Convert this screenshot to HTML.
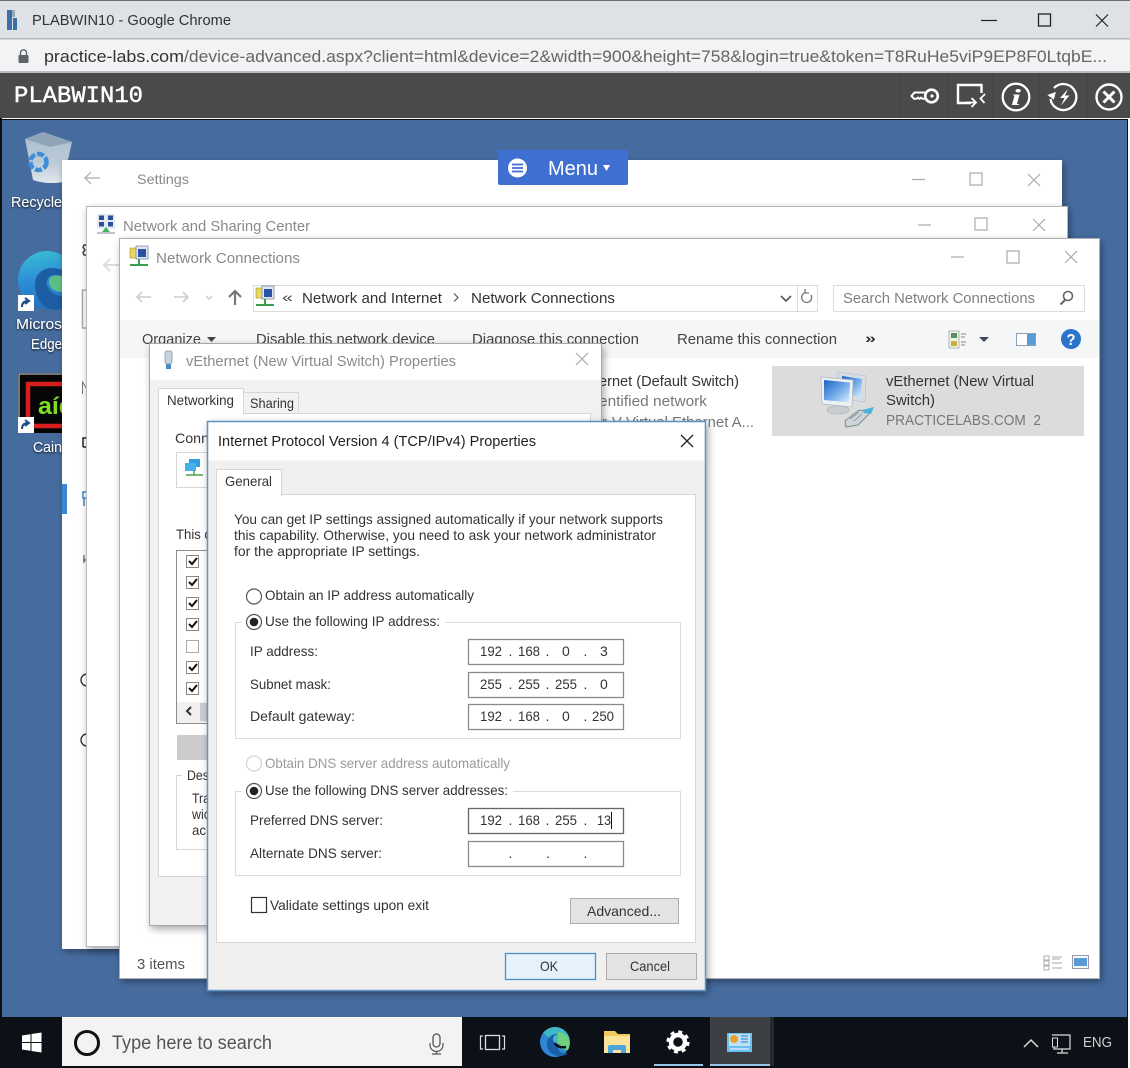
<!DOCTYPE html>
<html><head><meta charset="utf-8"><title>PLABWIN10</title>
<style>
html,body{margin:0;padding:0;background:#fff;width:1130px;height:1068px;overflow:hidden}
svg{display:block;filter:blur(.35px)}
text{font-family:"Liberation Sans",sans-serif;font-size:14px;fill:#333;white-space:pre}
.g{fill:#8a8a8a}.m{fill:#555}.d{fill:#222}.w{fill:#fff}
.f{font-size:14px;fill:#333}
.c{stroke:#aaa;stroke-width:1.2;fill:none}
.k{stroke:#111;stroke-width:1.8;fill:none}
</style></head><body>
<svg width="1130" height="1068" viewBox="0 0 1130 1068" xmlns="http://www.w3.org/2000/svg">
<defs>
<filter id="sh" x="-5%" y="-5%" width="110%" height="110%"><feDropShadow dx="2" dy="3" stdDeviation="4" flood-color="#000" flood-opacity=".35"/></filter>
<filter id="ts" x="-10%" y="-20%" width="120%" height="140%"><feDropShadow dx="0" dy="1" stdDeviation="1" flood-color="#000" flood-opacity=".9"/></filter>
<linearGradient id="ed" x1="0.2" y1="0" x2="0.4" y2="1"><stop offset="0" stop-color="#38bfd4"/><stop offset=".5" stop-color="#2c8ed6"/><stop offset="1" stop-color="#2470bd"/></linearGradient>
<linearGradient id="sc" x1="0" y1="0" x2="1" y2="1"><stop offset="0" stop-color="#1a62c8"/><stop offset=".6" stop-color="#7fb4ec"/><stop offset="1" stop-color="#e2effb"/></linearGradient>
<linearGradient id="bin" x1="0" y1="0" x2="0" y2="1"><stop offset="0" stop-color="#a9bccd"/><stop offset=".6" stop-color="#bccbd8"/><stop offset="1" stop-color="#e2e7ec"/></linearGradient>
<g id="net"><rect x="-9" y="-9" width="12" height="10" fill="#e8d860" stroke="#a09020" stroke-width=".6"/><rect x="-3" y="-11" width="12" height="13" fill="#dfe6f0" stroke="#7a8ca8" stroke-width=".8"/><rect x="-1" y="-8" width="8" height="8" fill="#2a50a8"/><path d="M-9 8H9M0 2V8" stroke="#3aa050" stroke-width="2" fill="none"/></g>
</defs>

<!-- chrome -->
<rect width="1130" height="38" fill="#dee1e6"/>
<rect width="1130" height="1" fill="#6b6e73"/>
<rect y="38" width="1130" height="1.5" fill="#b8babd"/>
<rect y="39.5" width="1130" height="32" fill="#f1f3f4"/>
<rect y="71" width="1130" height="2" fill="#b9bbbe"/>
<path d="M7 10h5v20H7zM13 18h4v12h-4z" fill="#3d6fa8"/><path d="M12 10h3v7h-3z" fill="#9ab"/>
<text x="32" y="25" textLength="199" lengthAdjust="spacingAndGlyphs" style="font-size:14.5px;fill:#333">PLABWIN10 - Google Chrome</text>
<path d="M981 20.500h16" stroke="#222" stroke-width="1.200"/>
<rect x="1038.500" y="14" width="12" height="12" fill="none" stroke="#222" stroke-width="1.300"/>
<path d="M1096 14.500l12 12M1108 14.500l-12 12" stroke="#222" stroke-width="1.200"/>
<rect x="18.500" y="55" width="10" height="8" rx="1" fill="#5f6368"/><path d="M20.500 55v-2.200a3 3 0 0 1 6 0V55" fill="none" stroke="#5f6368" stroke-width="1.400"/>
<text x="44" y="62" textLength="140" lengthAdjust="spacingAndGlyphs" style="font-size:17px;fill:#333">practice-labs.com</text>
<text x="184" y="62" textLength="923" lengthAdjust="spacingAndGlyphs" style="font-size:17px;fill:#666">/device-advanced.aspx?client=html&amp;device=2&amp;width=900&amp;height=758&amp;login=true&amp;token=T8RuHe5viP9EP8F0LtqbE...</text>

<!-- portal toolbar -->
<rect y="73" width="1130" height="45" fill="#4a4a4a"/>
<text x="14" y="102" textLength="129" lengthAdjust="spacingAndGlyphs" style="font-family:'Liberation Mono',monospace;font-size:23px;fill:#fff;stroke:#fff;stroke-width:.45">PLABWIN10</text>
<path d="M900.500 74v44M947.500 74v44M992.500 74v44M1039.500 74v44M1087.500 74v44" stroke="#444"/>
<g fill="none" stroke="#fff" stroke-width="2.300">
<!-- key -->
<circle cx="931.500" cy="96" r="6.300" stroke-width="2.600"/><circle cx="932" cy="96" r="1.600" fill="#fff" stroke="none"/>
<path d="M925 92.500h-10.500l-3 3.500 2.500 2.800h2.500l1.500-1.200 1.500 1.200 1.500-1.200 1.500 1.200h3" stroke-width="2"/>
<!-- screen -->
<path d="M971 103H958V85h23.500v8" stroke-width="2.400"/>
<path d="M971.500 98l4.500 4.500-4.500 4.500" stroke-width="1.800"/><path d="M985 94l-4.500 4.500 4 4.500" stroke-width="1.800"/>
<path d="M966 102.500h9" stroke-width="1.800"/>
<!-- info -->
<circle cx="1016" cy="97" r="13.300" stroke-width="2.300"/>
<!-- bolt -->
<path d="M1054 88a13 13 0 1 1-3.500 11" stroke-width="2.300"/>
<!-- close -->
<circle cx="1109" cy="97" r="12.500" stroke-width="2.400"/><path d="M1103.500 91.500l11 11M1114.500 91.500l-11 11" stroke-width="3"/>
</g>
<path d="M1048 93.500h9l-4.500 6.500z" fill="#fff" transform="rotate(-20 1052 96)"/>
<path d="M1068 89l-8 9h4.500l-3.500 7.500 8.500-10h-4.500z" fill="#fff"/>
<text x="1011" y="105" textLength="10" lengthAdjust="spacingAndGlyphs" style="font-family:'Liberation Serif',serif;font-style:italic;font-weight:bold;font-size:23px;fill:#fff">i</text>

<!-- desktop -->
<rect y="118" width="1130" height="950" fill="#fff"/>
<rect x="0" y="118" width="1128" height="950" fill="#0c0f14"/>
<rect x="2" y="118" width="1126" height="1" fill="#f4f4f4"/>
<rect x="2" y="120" width="1125" height="897" fill="#466c9f"/>

<!-- desktop icons -->
<path d="M25 139l18-7 29 10-9 40c-10 2-22 1-30-2z" fill="url(#bin)"/><path d="M25 139l18-7 29 10-22 5z" fill="#8fa4b8"/>
<circle cx="38.500" cy="162" r="8" fill="none" stroke="#3f8fd8" stroke-width="4.500" stroke-dasharray="7 2"/>
<text x="11" y="207" textLength="51" lengthAdjust="spacingAndGlyphs" filter="url(#ts)" style="font-size:14.500px;fill:#fff">Recycle</text>
<circle cx="47" cy="280" r="29" fill="url(#ed)"/>
<path d="M35 284c0-12 12-20 27-14v7c-9-5-17 0-15 8 2 7 9 11 15 11v13c-4 1-8 1-12 0-9-3-15-13-15-25z" fill="#1c5da3"/>
<path d="M49 283c-1-6 5-9 13-7v16c-6 0-12-3-13-9z" fill="#5dbf86"/>
<rect x="18" y="295" width="16" height="16" fill="#fff"/><path d="M22 307c0-4 2-6 6-6M25 298l4 3-4 3" stroke="#1a4e8a" stroke-width="2" fill="none"/>
<text x="16" y="329" textLength="46" lengthAdjust="spacingAndGlyphs" filter="url(#ts)" style="font-size:14.500px;fill:#fff">Micros</text>
<text x="31" y="349" textLength="31" lengthAdjust="spacingAndGlyphs" filter="url(#ts)" style="font-size:14.500px;fill:#fff">Edge</text>
<rect x="18" y="373" width="46" height="60" fill="#060606"/><path d="M19 433v-59h44" fill="none" stroke="#e4e4e4" stroke-width="1"/><path d="M64 384H28v42h36" fill="none" stroke="#d81e1e" stroke-width="4.500"/>
<text x="38" y="414" textLength="36" lengthAdjust="spacingAndGlyphs" style="font-size:24px;font-weight:bold;fill:#7ee020">aíd</text>
<rect x="18" y="417" width="16" height="16" fill="#fff"/><path d="M22 429c0-4 2-6 6-6M25 420l4 3-4 3" stroke="#1a4e8a" stroke-width="2" fill="none"/>
<text x="33" y="452" textLength="29" lengthAdjust="spacingAndGlyphs" filter="url(#ts)" style="font-size:14.500px;fill:#fff">Cain</text>

<!-- settings window -->
<rect x="62" y="160" width="1000" height="789" fill="#fff" filter="url(#sh)"/>
<path d="M85 178h15M91 172l-6 6 6 6" class="c"/>
<text x="137" y="184" textLength="52" lengthAdjust="spacingAndGlyphs" class="g">Settings</text>
<path d="M912 179.500h13" class="c"/><rect x="970" y="173" width="12" height="12" class="c"/><path d="M1028 174l12 12M1040 174l-12 12" class="c"/>
<rect x="62" y="484" width="5" height="30" fill="#3a87d6"/>
<path d="M87 290h-4.500v38h4.500" stroke="#aaa" stroke-width="1.500" fill="none"/>
<path d="M87 245h-3l-1 2.500 2 2.500-2 2.500 1 2.500h3" stroke="#444" stroke-width="1.500" fill="none"/>
<path d="M82.500 394v-12l5 8" stroke="#777" fill="none"/>
<path d="M83 447v-9h4M83 447h4" stroke="#222" stroke-width="1.500" fill="none"/>
<path d="M83 492h4v6h-4zM84 498v8" stroke="#3a87d6" stroke-width="1.500" fill="none"/>
<path d="M83 560h4M84 555v8" stroke="#444" fill="none"/><path d="M87 674a6 6 0 0 0 0 12" stroke="#333" stroke-width="1.400" fill="none"/><path d="M87 734a6 6 0 0 0 0 12" stroke="#333" stroke-width="1.400" fill="none"/>

<!-- sharing center window -->
<rect x="86.500" y="206.500" width="981" height="740" fill="#fff" stroke="#b8b8b8" filter="url(#sh)"/>
<g transform="translate(97 214)"><rect width="18" height="15" fill="#e6e9f2"/><path d="M2 1.500h5v4.500H2zM11 1.500h5v4.500h-5zM2 8h5v4.500H2zM11 8h5v4.500h-5z" fill="#2a4fa0"/><path d="M9 13l4 5H5z" fill="#45b060"/><path d="M0 19H18" stroke="#a8b0b8" stroke-width="1.500"/></g>
<text x="123" y="231" textLength="187" lengthAdjust="spacingAndGlyphs" class="g" style="font-size:15px">Network and Sharing Center</text>
<path d="M918 225h13" class="c"/><rect x="975" y="218" width="12" height="12" class="c"/><path d="M1033 219l12 12M1045 219l-12 12" class="c"/>
<path d="M104 265h15M110 259l-6 6 6 6" stroke="#ddd" stroke-width="2" fill="none"/>

<!-- network connections window -->
<rect x="119.500" y="238.500" width="980" height="740" fill="#fff" stroke="#b0b0b0" filter="url(#sh)"/>
<g transform="translate(139 257)"><use href="#net"/></g>
<text x="156" y="263" textLength="144" lengthAdjust="spacingAndGlyphs" class="g" style="font-size:15px">Network Connections</text>
<path d="M951 257h13" class="c"/><rect x="1007" y="251" width="12" height="12" class="c"/><path d="M1065 251l12 12M1077 251l-12 12" class="c"/>
<path d="M137 297h14M142 292l-5 5 5 5M174 297h14M183 292l5 5-5 5" stroke="#ccc" stroke-width="1.600" fill="none"/>
<path d="M206 296l3 3 3-3" stroke="#ccc" stroke-width="1.400" fill="none"/>
<path d="M235 305V291M229 297l6-6 6 6" stroke="#777" stroke-width="2.200" fill="none"/>
<rect x="253.500" y="285.500" width="564" height="26" fill="#fff" stroke="#dcdcdc"/>
<path d="M797.500 286v25" stroke="#dcdcdc"/>
<g transform="translate(265 297)"><use href="#net"/></g>
<text x="282" y="302" textLength="11" lengthAdjust="spacingAndGlyphs" style="font-size:14px;fill:#444">«</text>
<text x="302" y="303" textLength="140" lengthAdjust="spacingAndGlyphs" style="font-size:14.500px;fill:#333">Network and Internet</text>
<path d="M454 293.500l4 4-4 4" stroke="#555" fill="none" stroke-width="1.200"/>
<text x="471" y="303" textLength="144" lengthAdjust="spacingAndGlyphs" style="font-size:14.500px;fill:#333">Network Connections</text>
<path d="M781 296l5 5 5-5" stroke="#555" stroke-width="1.600" fill="none"/>
<path d="M811 295a5 5 0 1 1-5-2.500M805 289v4h4" stroke="#777" stroke-width="1.300" fill="none"/>
<rect x="833.500" y="285.500" width="251" height="26" fill="#fff" stroke="#dcdcdc"/>
<text x="843" y="303" textLength="192" lengthAdjust="spacingAndGlyphs" style="font-size:14.500px;fill:#808080">Search Network Connections</text>
<circle cx="1068" cy="296" r="4.500" fill="none" stroke="#666" stroke-width="1.600"/><path d="M1065 300l-4.500 4.500" stroke="#666" stroke-width="2"/>
<rect x="120" y="320" width="979" height="38" fill="#f5f6f7"/>
<text x="142" y="344" textLength="59" lengthAdjust="spacingAndGlyphs" style="font-size:14.500px;fill:#444">Organize</text><path d="M207 337h9l-4.500 5z" fill="#444"/>
<text x="256" y="344" textLength="179" lengthAdjust="spacingAndGlyphs" style="font-size:14.500px;fill:#444">Disable this network device</text>
<text x="472" y="344" textLength="167" lengthAdjust="spacingAndGlyphs" style="font-size:14.500px;fill:#444">Diagnose this connection</text>
<text x="677" y="344" textLength="160" lengthAdjust="spacingAndGlyphs" style="font-size:14.500px;fill:#444">Rename this connection</text>
<text x="865" y="343" textLength="11" lengthAdjust="spacingAndGlyphs" style="font-size:14px;fill:#333;font-weight:bold">»</text>
<rect x="949" y="331" width="10" height="17" fill="#eef3ea" stroke="#999" stroke-width=".7"/><rect x="951" y="333" width="6" height="5" fill="#5a8f60"/><rect x="951" y="341" width="6" height="5" fill="#c8b040"/><path d="M961 334h5M961 337h4M961 342h5M961 345h4" stroke="#888"/>
<path d="M979 337h10l-5 5z" fill="#3c4a5c"/>
<rect x="1016.500" y="333.500" width="19" height="12" fill="#fff" stroke="#8aa0b8"/><rect x="1027" y="334" width="8" height="11" fill="#5a9bd6"/>
<circle cx="1071" cy="339" r="10" fill="#2b74c9"/>
<text x="1066.500" y="345" textLength="9" lengthAdjust="spacingAndGlyphs" style="font-size:16px;font-weight:bold;fill:#fff">?</text>

<!-- items -->
<text x="599" y="386" textLength="140" lengthAdjust="spacingAndGlyphs" style="font-size:14.500px;fill:#333">ernet (Default Switch)</text>
<text x="599" y="406" textLength="108" lengthAdjust="spacingAndGlyphs" style="font-size:14.500px;fill:#777">entified network</text>
<text x="602" y="427" textLength="152" lengthAdjust="spacingAndGlyphs" style="font-size:14.500px;fill:#777">r-V Virtual Ethernet A...</text>
<rect x="772" y="366" width="312" height="70" fill="#dcdcdc"/>
<!-- network icon -->
<path d="M838 372l28 4-1 26-27-4z" fill="#d6dce3" stroke="#b4bcc4" stroke-width=".6"/>
<path d="M842 376l20 3-1 18-19-3z" fill="url(#sc)"/>
<path d="M821 377l32 3-1 27-30-3z" fill="#eef1f4" stroke="#aeb6be" stroke-width=".7"/>
<path d="M824 380l26 2.500-1 20-25-2.500z" fill="url(#sc)"/>
<ellipse cx="838" cy="410" rx="11" ry="4" fill="#c9ced3" stroke="#a9afb5" stroke-width=".6"/>
<path d="M845 421l14-11 12 2-13 13-12 2z" fill="#cdd5d9" stroke="#7e8c92" stroke-width="1"/>
<path d="M850 419l9-7M854 421l8-7" stroke="#7e8c92" stroke-width=".8"/>
<path d="M862 410l12-3-3 7-7-1z" fill="#49b3d8"/>
<text x="886" y="386" textLength="148" lengthAdjust="spacingAndGlyphs" style="font-size:14.500px;fill:#333">vEthernet (New Virtual</text>
<text x="886" y="405" textLength="49" lengthAdjust="spacingAndGlyphs" style="font-size:14.500px;fill:#333">Switch)</text>
<text x="886" y="425" textLength="155" lengthAdjust="spacingAndGlyphs" style="font-size:14.500px;fill:#777">PRACTICELABS.COM  2</text>
<text x="137" y="969" textLength="48" lengthAdjust="spacingAndGlyphs" style="font-size:14.500px;fill:#555">3 items</text>
<path d="M1044 956h5v4h-5zM1044 961h5v4h-5zM1044 966h5v4h-5z" fill="none" stroke="#999" stroke-width=".8"/><path d="M1052 957h10M1052 959h8M1052 963h10M1052 968h10" stroke="#aaa"/>
<rect x="1072.500" y="955.500" width="16" height="13" fill="#f4f8fb" stroke="#99a"/><rect x="1074" y="958" width="13" height="8" fill="#5a9bd6"/>

<!-- properties window -->
<rect x="149.500" y="343.500" width="452" height="582" fill="#f1f1f1" stroke="#a8a8a8" filter="url(#sh)"/>
<rect x="150" y="344" width="451" height="36" fill="#fff"/>
<rect x="165" y="351" width="7" height="13" rx="2" fill="#c8d4dc" stroke="#8a9aa6" stroke-width=".8"/><rect x="166" y="364" width="5" height="5" fill="#4a8ac0"/>
<text x="186" y="366" textLength="270" lengthAdjust="spacingAndGlyphs" class="g" style="font-size:15px">vEthernet (New Virtual Switch) Properties</text>
<path d="M576 353l12 12M588 353l-12 12" class="c"/>
<rect x="158.500" y="413.500" width="432" height="463" fill="#fff" stroke="#d6d6d6"/>
<rect x="243.500" y="392.500" width="55" height="21" fill="#f2f2f2" stroke="#d6d6d6"/>
<rect x="158.500" y="388.500" width="85" height="25" fill="#fff" stroke="#d6d6d6"/><rect x="159" y="412" width="84" height="3" fill="#fff"/>
<text x="167" y="405" textLength="67" lengthAdjust="spacingAndGlyphs" style="font-size:14px;fill:#333">Networking</text>
<text x="250" y="408" textLength="44" lengthAdjust="spacingAndGlyphs" style="font-size:14px;fill:#333">Sharing</text>
<text x="175" y="443" textLength="34" lengthAdjust="spacingAndGlyphs" style="font-size:14px;fill:#333">Conn</text>
<rect x="176.500" y="452.500" width="60" height="35" fill="#fff" stroke="#d6d6d6"/>
<rect x="189" y="459" width="11" height="8" fill="#2f9fe0"/><rect x="185" y="463" width="11" height="8" fill="#47b0ea"/><path d="M186 475h17M194 471v4" stroke="#4aa050" stroke-width="1.500"/>
<text x="176" y="539" textLength="35" lengthAdjust="spacingAndGlyphs" style="font-size:14px;fill:#333">This c</text>
<rect x="176.500" y="550.500" width="60" height="173" fill="#fff" stroke="#8c8c8c"/>
<g fill="#fff" stroke="#888"><rect x="186.500" y="555.500" width="12" height="12"/><rect x="186.500" y="576.500" width="12" height="12"/><rect x="186.500" y="597.500" width="12" height="12"/><rect x="186.500" y="618.500" width="12" height="12"/><rect x="186.500" y="640.500" width="12" height="12" stroke="#aaa"/><rect x="186.500" y="661.500" width="12" height="12"/><rect x="186.500" y="682.500" width="12" height="12"/></g>
<g fill="none" stroke="#111" stroke-width="2"><path d="M189 561l3 3 5-6M189 582l3 3 5-6M189 603l3 3 5-6M189 624l3 3 5-6M189 667l3 3 5-6M189 688l3 3 5-6"/></g>
<rect x="177" y="702" width="59" height="21" fill="#f0f0f0"/><rect x="200" y="703" width="10" height="18" fill="#cdcdcd"/>
<path d="M191 707l-4 4 4 4" stroke="#333" stroke-width="2" fill="none"/>
<rect x="177" y="735" width="40" height="25" fill="#cccccc"/>
<rect x="176.500" y="775.500" width="60" height="74" fill="none" stroke="#d6d6d6"/>
<rect x="182" y="770" width="30" height="12" fill="#fff"/>
<text x="187" y="780" textLength="22" lengthAdjust="spacingAndGlyphs" style="font-size:14px;fill:#333">Des</text>
<text x="192" y="803" textLength="18" lengthAdjust="spacingAndGlyphs" style="font-size:14px;fill:#333">Tra</text>
<text x="192" y="819" textLength="18" lengthAdjust="spacingAndGlyphs" style="font-size:14px;fill:#333">wic</text>
<text x="192" y="835" textLength="14" lengthAdjust="spacingAndGlyphs" style="font-size:14px;fill:#333">ac</text>

<!-- ipv4 window -->
<rect x="207.500" y="421.500" width="498" height="569" fill="#f0f0f0" stroke="#5f94c4" stroke-width="1.500" filter="url(#sh)"/>
<rect x="208.500" y="422.500" width="496" height="38" fill="#fff"/>
<text x="218" y="446" textLength="318" lengthAdjust="spacingAndGlyphs" style="font-size:14.500px;fill:#222">Internet Protocol Version 4 (TCP/IPv4) Properties</text>
<path d="M681 435l12 12M693 435l-12 12" stroke="#222" stroke-width="1.300"/>
<rect x="216.500" y="494.500" width="479" height="448" fill="#fff" stroke="#d6d6d6"/>
<rect x="216.500" y="469.500" width="65" height="26" fill="#fff" stroke="#d6d6d6"/><rect x="217" y="493" width="64" height="3" fill="#fff"/>
<text x="225" y="486" textLength="47" lengthAdjust="spacingAndGlyphs" style="font-size:14px;fill:#333">General</text>
<text x="234" y="524" textLength="429" lengthAdjust="spacingAndGlyphs" class="f">You can get IP settings assigned automatically if your network supports</text>
<text x="234" y="540" textLength="422" lengthAdjust="spacingAndGlyphs" class="f">this capability. Otherwise, you need to ask your network administrator</text>
<text x="234" y="556" textLength="186" lengthAdjust="spacingAndGlyphs" class="f">for the appropriate IP settings.</text>

<rect x="235.500" y="622.500" width="445" height="116" fill="none" stroke="#dcdcdc"/>
<rect x="242" y="614" width="203" height="16" fill="#fff"/>
<circle cx="254" cy="596.500" r="7.500" fill="#fff" stroke="#555" stroke-width="1.200"/>
<text x="265" y="600" textLength="209" lengthAdjust="spacingAndGlyphs" class="f">Obtain an IP address automatically</text>
<circle cx="254" cy="622" r="7.500" fill="#fff" stroke="#555" stroke-width="1.200"/><circle cx="254" cy="622" r="4.300" fill="#222"/>
<text x="265" y="626" textLength="175" lengthAdjust="spacingAndGlyphs" class="f">Use the following IP address:</text>
<text x="250" y="656" textLength="68" lengthAdjust="spacingAndGlyphs" class="f">IP address:</text>
<text x="250" y="689" textLength="81" lengthAdjust="spacingAndGlyphs" class="f">Subnet mask:</text>
<text x="250" y="721" textLength="105" lengthAdjust="spacingAndGlyphs" class="f">Default gateway:</text>
<g fill="#fff" stroke="#8a8a8a" stroke-width="1.300"><rect x="468.500" y="639.500" width="155" height="25"/><rect x="468.500" y="672.500" width="155" height="25"/><rect x="468.500" y="704.500" width="155" height="25"/><rect x="468.500" y="808.500" width="155" height="25" stroke="#666"/><rect x="468.500" y="841.500" width="155" height="25"/></g>
<g class="f">
<text x="480" y="656" textLength="22" lengthAdjust="spacingAndGlyphs" class="f">192</text><text x="508.500" y="656" class="f">.</text><text x="518" y="656" textLength="22" lengthAdjust="spacingAndGlyphs" class="f">168</text><text x="545.500" y="656" class="f">.</text><text x="562" y="656" class="f">0</text><text x="583.500" y="656" class="f">.</text><text x="600" y="656" class="f">3</text>
<text x="480" y="689" textLength="22" lengthAdjust="spacingAndGlyphs" class="f">255</text><text x="508.500" y="689" class="f">.</text><text x="518" y="689" textLength="22" lengthAdjust="spacingAndGlyphs" class="f">255</text><text x="545.500" y="689" class="f">.</text><text x="555" y="689" textLength="22" lengthAdjust="spacingAndGlyphs" class="f">255</text><text x="583.500" y="689" class="f">.</text><text x="600" y="689" class="f">0</text>
<text x="480" y="721" textLength="22" lengthAdjust="spacingAndGlyphs" class="f">192</text><text x="508.500" y="721" class="f">.</text><text x="518" y="721" textLength="22" lengthAdjust="spacingAndGlyphs" class="f">168</text><text x="545.500" y="721" class="f">.</text><text x="562" y="721" class="f">0</text><text x="583.500" y="721" class="f">.</text><text x="592" y="721" textLength="22" lengthAdjust="spacingAndGlyphs" class="f">250</text>
<text x="480" y="825" textLength="22" lengthAdjust="spacingAndGlyphs" class="f">192</text><text x="508.500" y="825" class="f">.</text><text x="518" y="825" textLength="22" lengthAdjust="spacingAndGlyphs" class="f">168</text><text x="545.500" y="825" class="f">.</text><text x="555" y="825" textLength="22" lengthAdjust="spacingAndGlyphs" class="f">255</text><text x="583.500" y="825" class="f">.</text><text x="597" y="825" textLength="14" lengthAdjust="spacingAndGlyphs" class="f">13</text>
<text x="508.500" y="858" class="f">.</text><text x="546" y="858" class="f">.</text><text x="583.500" y="858" class="f">.</text>
</g>
<path d="M611.500 812v17" stroke="#111"/>

<circle cx="254" cy="763.500" r="7.500" fill="#fff" stroke="#d4d4d4" stroke-width="1.200"/>
<text x="265" y="768" textLength="245" lengthAdjust="spacingAndGlyphs" style="font-size:14px;fill:#9a9a9a">Obtain DNS server address automatically</text>
<rect x="235.500" y="791.500" width="445" height="84" fill="none" stroke="#dcdcdc"/>
<rect x="242" y="783" width="271" height="16" fill="#fff"/>
<circle cx="254" cy="791" r="7.500" fill="#fff" stroke="#555" stroke-width="1.200"/><circle cx="254" cy="791" r="4.300" fill="#222"/>
<text x="265" y="795" textLength="243" lengthAdjust="spacingAndGlyphs" class="f">Use the following DNS server addresses:</text>
<text x="250" y="825" textLength="133" lengthAdjust="spacingAndGlyphs" class="f">Preferred DNS server:</text>
<text x="250" y="858" textLength="132" lengthAdjust="spacingAndGlyphs" class="f">Alternate DNS server:</text>
<rect x="251.500" y="897.500" width="15" height="15" fill="#fff" stroke="#333" stroke-width="1.200"/>
<text x="270" y="910" textLength="159" lengthAdjust="spacingAndGlyphs" class="f">Validate settings upon exit</text>
<rect x="570.500" y="898.500" width="108" height="25" fill="#e3e3e3" stroke="#adadad"/>
<text x="587" y="916" textLength="74" lengthAdjust="spacingAndGlyphs" class="f">Advanced...</text>
<rect x="505.500" y="953.500" width="90" height="26" fill="#e5f1fb" stroke="#4a90c8" stroke-width="1.300"/>
<text x="540" y="971" textLength="18" lengthAdjust="spacingAndGlyphs" class="f">OK</text>
<rect x="606.500" y="953.500" width="90" height="26" fill="#e3e3e3" stroke="#adadad"/>
<text x="630" y="971" textLength="40" lengthAdjust="spacingAndGlyphs" class="f">Cancel</text>

<!-- menu button -->
<path d="M498 150h128a2 2 0 0 1 2 2v31a2 2 0 0 1-2 2H500a2 2 0 0 1-2-2z" fill="#3f6fd1"/>
<circle cx="517.500" cy="168" r="9.500" fill="#fff"/><path d="M512 164.500h11M512 168h11M512 171.500h11" stroke="#3f6fd1" stroke-width="1.700"/>
<text x="548" y="175" textLength="50" lengthAdjust="spacingAndGlyphs" style="font-size:20px;fill:#fff">Menu</text>
<path d="M603 165h7l-3.500 6z" fill="#fff"/>

<!-- taskbar -->
<rect x="2" y="1017" width="1125" height="49" fill="#0b1117"/>
<path d="M22 1035.500l8.500-1.300v7.800H22zM31.500 1034l10-1.500v9.500h-10zM22 1043h8.500v7.800l-8.500-1.300zM31.500 1043h10v9.500l-10-1.500z" fill="#fff"/>
<rect x="62" y="1017" width="400" height="49" fill="#f3f3f3"/>
<circle cx="87" cy="1043" r="11.500" fill="none" stroke="#111" stroke-width="3"/>
<text x="112" y="1049" textLength="160" lengthAdjust="spacingAndGlyphs" style="font-size:19px;fill:#555">Type here to search</text>
<rect x="433" y="1034" width="7" height="13" rx="3.500" fill="none" stroke="#555" stroke-width="1.300"/><path d="M430 1043v2a6.500 6.500 0 0 0 13 0v-2M436.500 1052v2M432 1054h9" fill="none" stroke="#555" stroke-width="1.200"/>
<rect x="485.500" y="1035.500" width="14" height="14" fill="none" stroke="#ddd" stroke-width="1.300"/><path d="M483 1036h-2.500v13h2.500M502 1036h2.500v13H502" fill="none" stroke="#ddd" stroke-width="1.200"/>
<!-- edge -->
<circle cx="555" cy="1042" r="15" fill="#2f86d5"/>
<path d="M543 1033a15 15 0 0 1 26 4c1 4 1 9-1 12-6 0-11-1-12-6z" fill="#3fb8c8"/>
<path d="M558 1032c6 0 10 4 11.500 8 .5 3 .3 7-1.500 10-5 0-10-2-10-7z" fill="#6fd07e"/>
<path d="M566 1044h-8c-3 0-5-2-5-5 0-3 3-5 6-5-6-1-12 3-12 10 0 7 6 12 13 12 3 0 6-1 8-3-5 1-10-1-10-5 0-2 1-4 3-4h5z" fill="#1b5fa8"/>
<path d="M555 1043c1 3 5 5 11 4" fill="none" stroke="#0b1117" stroke-width="2.500"/>
<!-- folder -->
<path d="M604 1031h11l3 3h12v19h-26z" fill="#f0c95f"/><rect x="604" y="1036" width="26" height="17" fill="#fbe39a"/><path d="M608 1053v-6a2 2 0 0 1 2-2h14a2 2 0 0 1 2 2v6h-5v-3h-8v3z" fill="#4aa5d8"/>
<circle cx="678" cy="1042" r="7" fill="none" stroke="#fff" stroke-width="4.500"/><circle cx="678" cy="1042" r="10" fill="none" stroke="#fff" stroke-width="3.200" stroke-dasharray="3.900 3.950"/>
<rect x="710" y="1017" width="60" height="49" fill="#3c4045"/><rect x="770" y="1017" width="4" height="49" fill="#24292e"/>
<rect x="654" y="1064" width="49" height="2" fill="#9cc4e8"/><rect x="710" y="1064" width="60" height="2" fill="#9cc4e8"/>
<rect x="727" y="1033" width="25" height="19" fill="#6cc0f0"/><rect x="729" y="1034" width="21" height="12" fill="#bfe2f8"/><circle cx="734" cy="1039" r="4" fill="#e8a030"/><path d="M741 1036h7M741 1039h7M741 1042h7" stroke="#3a8ed0" stroke-width="1.200"/><path d="M730 1049h19" stroke="#e4f2fc" stroke-width="1.200"/>
<path d="M1024 1047l7-7 7 7" fill="none" stroke="#ddd" stroke-width="1.500"/>
<rect x="1052.500" y="1038" width="5" height="9" fill="none" stroke="#ddd"/><path d="M1058 1035h12v14h-16v-2M1062 1049v4M1057 1053h11M1052 1035h6" fill="none" stroke="#ddd" stroke-width="1.200"/>
<text x="1083" y="1047" textLength="29" lengthAdjust="spacingAndGlyphs" style="font-size:14.500px;fill:#cfcfcf">ENG</text>
</svg>
</body></html>
